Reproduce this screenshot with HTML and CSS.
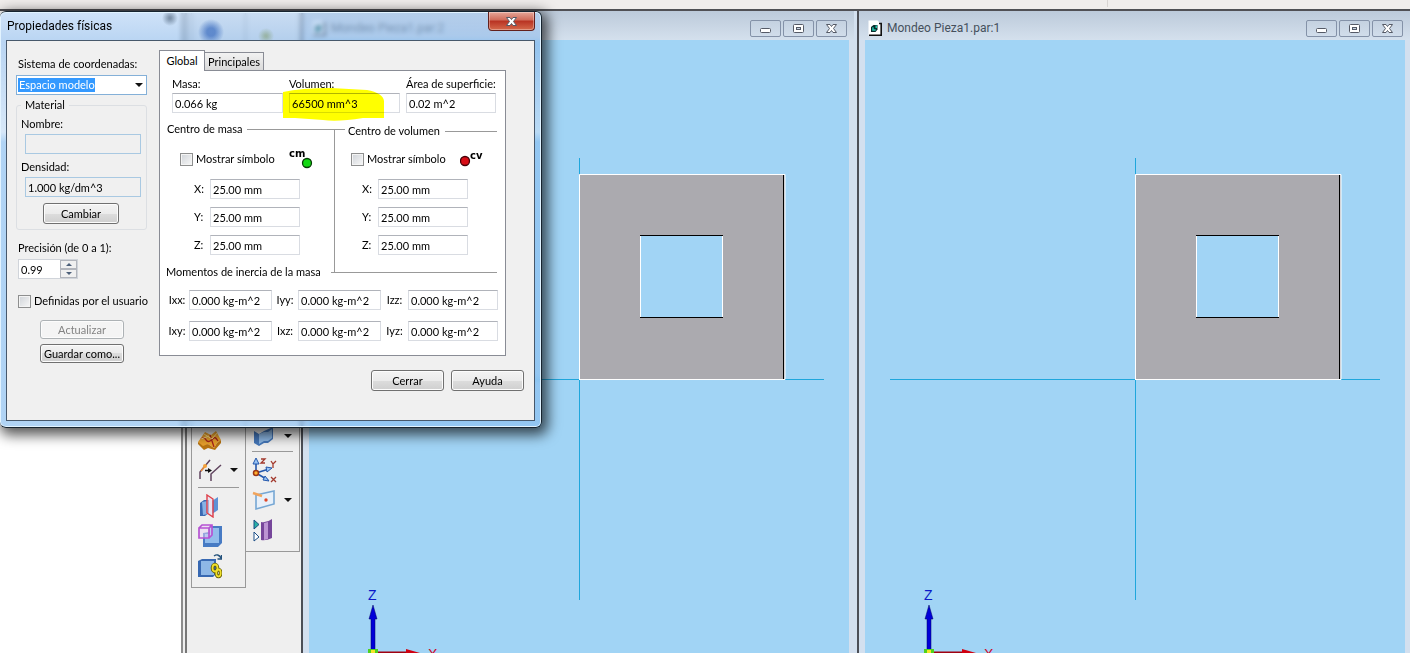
FILE: index.html
```html
<!DOCTYPE html>
<html lang="es">
<head>
<meta charset="utf-8">
<title>Propiedades físicas</title>
<link rel="stylesheet" href="styles.css">
</head>
<body>
<svg class="defs" aria-hidden="true">
  <symbol id="ic-min" viewBox="0 0 13 11"><rect x="1.5" y="5.500" width="10" height="4" rx="1" fill="#fff" stroke="#555a66"/></symbol>
  <symbol id="ic-max" viewBox="0 0 13 11"><rect x="1.500" y="1.500" width="10" height="8" rx="1" fill="#fff" stroke="#555a66"/><rect x="4.500" y="4.500" width="4" height="2" fill="#c9d6e5" stroke="#555a66"/></symbol>
  <symbol id="ic-close" viewBox="0 0 13 11"><path d="M1.500 1.500h3.500l1.500 2 1.500-2h3.500l-3 4 3 4h-3.500l-1.500-2-1.500 2h-3.500l3-4z" fill="#fff" stroke="#555a66" stroke-linejoin="round"/></symbol>
  <symbol id="ic-doc" viewBox="0 0 14 16"><path d="M.5.500h9l4 4v11h-13z" fill="#fff"/><path d="M1 15.200h12.200V3.500H11" fill="none" stroke="#111" stroke-width="1.600"/><path d="M3 7l2.500-2h4v4.500L7.500 12H3z" fill="#0a2b2b"/><path d="M4.200 7.200h1.500v2h2v1.600H4.200zM7.500 5.500h1.500v2.500H7.500z" fill="#24c7ad"/></symbol>
  <symbol id="part" viewBox="0 0 540 613">
    <path d="M270.500 118v442M25 339.500h490" stroke="#1fa6dc" fill="none"/>
    <path fill-rule="evenodd" d="M270 134h206v206H270zM331 195v83h83v-83z" fill="#abaaaf"/>
    <path d="M270.500 340V134.500H476M270 339.500h206v-205M331.500 195v83M413.500 195v83" fill="none" stroke="#fff"/>
    <path d="M474.500 135v204M331 195.500h83M331 277.500h83" fill="none" stroke="#000"/>
    <path d="M62 610v-31h-2l4-14 4 14h-2v31z" fill="#0000d8" stroke="#000060" stroke-width=".5"/>
    <path d="M68 612.500h32" stroke="#a00010" stroke-width="2"/><path d="M97 609l14 4H97z" fill="#d00010"/>
    <path d="M59 609h10v4H59z" fill="#4fd21c"/><path d="M62 610h4v3h-4z" fill="#f5e52a"/>
  </symbol>
</svg>

<div class="app">
  <div class="topstrip"><span></span></div>
  <main class="workspace">
    <div class="blank"></div>
    <div class="splitter"></div>
    <nav class="toolbars" aria-label="Herramientas">
      <div class="bar bar-a">
        <button class="tool" aria-label="Superficie"><svg width="24" height="20" viewBox="0 0 24 20"><path d="M0 12L7 2l6 3 5-4 5 9-4 3-3 5-6-4-5 4z" fill="#eaa12c"/><path d="M0 12l5 4 5-2 6 4 3-5 4-3v3l-6 7-7-2-4 2-6-6z" fill="#b97411"/><path d="M3 9c6-4 4 5 9 2s4-6 8 0M12 5l4 12" fill="none" stroke="#a8231b" stroke-width="1.300"/><path d="M6 4l8 5 5-6M3 9l8-3" stroke="#ffdf85" fill="none"/></svg></button>
        <button class="tool" aria-label="Curva"><svg width="24" height="24" viewBox="0 0 24 24"><path d="M2 21v-7L12 2M13 23v-7L23 7" fill="none" stroke="#60445f" stroke-width="1.500"/><path d="M3 13l5-6" stroke="#e98a3a" stroke-width="1.500"/><circle cx="7" cy="8" r="2" fill="#f4a23b"/><path d="M7 12.500h4" stroke="#111" stroke-width="1.500"/><path d="M10 10l4 2.500-4 2.500z" fill="#111"/></svg><i class="caret"></i></button>
        <hr>
        <button class="tool" aria-label="Plano coincidente"><svg width="24" height="24" viewBox="0 0 24 24"><path d="M2 9l4-3h5v13l-4 3H2z" fill="#3a69b3"/><path d="M4 8l6-1v13l-5 1z" fill="#87b2e5"/><path d="M14 7l6-4v13l-6 4z" fill="#5c91d6"/><path d="M9 1l6 4v18l-6-4z" fill="#e7dcf0" fill-opacity=".65" stroke="#df3e48" stroke-width="1.400"/></svg></button>
        <button class="tool" aria-label="Plano paralelo"><svg width="24" height="24" viewBox="0 0 24 24"><path d="M5 9l6-1V4l2-2h11v17l-4 4H5z" fill="#477bc4"/><path d="M7 10h5V4h9v15H7z" fill="#92bdec"/><path d="M1 4h10v10H1zM1 4l3-3h10v10l-3 3M11 4l3-3" fill="#e9d4f5" fill-opacity=".5" stroke="#b653d3" stroke-width="1.700"/></svg></button>
        <button class="tool" aria-label="Copia vinculada"><svg width="24" height="26" viewBox="0 0 24 26"><path d="M0 8l4-2h14v15l-3 3H0z" fill="#3768b2"/><path d="M3 8h13v14H3z" fill="#8db7e7"/><path d="M16 3q4-3 7 2m.5-3v4h-4" fill="none" stroke="#24527c" stroke-width="1.400"/><g fill="none" stroke="#5d5600" stroke-width="3.600"><ellipse cx="17" cy="15" rx="2.500" ry="3.500"/><ellipse cx="20.500" cy="20" rx="2.200" ry="3.500"/></g><g fill="none" stroke="#efe02c" stroke-width="1.800"><ellipse cx="17" cy="15" rx="2.500" ry="3.500"/><ellipse cx="20.500" cy="20" rx="2.200" ry="3.500"/></g></svg></button>
      </div>
      <div class="bar bar-b">
        <button class="tool" aria-label="Extruir"><svg width="24" height="20" viewBox="0 0 24 20"><path d="M2 5l5 3 5-3 9-4v12l-5 4-4 0-5 3-5-3z" fill="#4577b9"/><path d="M7 8l5-2 4 0 4-3v9l-4 3-4 0-5 3z" fill="#8eb9e6"/></svg><i class="caret"></i></button>
        <hr>
        <button class="tool" aria-label="Sistema de coordenadas"><svg width="26" height="26" viewBox="0 0 26 26"><path d="M4 16V4M4 16l13-4M4 16l12 7" stroke="#2357ac" stroke-width="1.600" fill="none"/><path d="M1 7l3-6 3 6zM14 10l6 1-5 4zM11 23l6 1-4-5z" fill="#9ac5f4" stroke="#2357ac"/><circle cx="4" cy="16" r="2.500" fill="#ffb02e" stroke="#9b3415" stroke-width="1.500"/><path d="M9 2h4L9 6h4M19 4l2 3 3-3M21 7v4M19 20l5 5m0-5l-5 5" stroke="#a33a2e" stroke-width="1.300" fill="none"/></svg></button>
        <button class="tool" aria-label="Boceto"><svg width="24" height="22" viewBox="0 0 24 22"><path d="M4 6l18-4v13L4 20z" fill="#e7f0fa" stroke="#76a7d4" stroke-width="1.600"/><path d="M1 4l9 3" stroke="#f1a45c" stroke-width="2.500"/><circle cx="14" cy="11" r="1.700" fill="#e04728"/></svg><i class="caret"></i></button>
        <button class="tool" aria-label="Simetría"><svg width="24" height="26" viewBox="0 0 24 26"><path d="M2 3l5 4.500L2 12z" fill="#28b1a4" stroke="#1a4d85"/><path d="M2 15l5 5-5 4z" fill="#fff" stroke="#1a4d85"/><path d="M9 5q6 1 11-3v19q-6 3-11 2z" fill="#76469a"/><path d="M12 6l4-1v17l-4 1z" fill="#bc94d3"/></svg></button>
      </div>
    </nav>
    <section class="doc">
      <header class="doc-title"><svg class="doc-icon"><use href="#ic-doc"/></svg><h2>Mondeo Pieza1.par:2</h2>
        <div class="doc-btns"><button aria-label="Minimizar"><svg><use href="#ic-min"/></svg></button><button aria-label="Maximizar"><svg><use href="#ic-max"/></svg></button><button aria-label="Cerrar ventana"><svg><use href="#ic-close"/></svg></button></div></header>
      <div class="canvas"><svg class="model" viewBox="0 0 540 613"><use href="#part"/><text x="59" y="560" class="axis-z">Z</text><text x="119" y="619" class="axis-x">X</text></svg></div>
    </section>
    <section class="doc">
      <header class="doc-title"><svg class="doc-icon"><use href="#ic-doc"/></svg><h2>Mondeo Pieza1.par:1</h2>
        <div class="doc-btns"><button aria-label="Minimizar"><svg><use href="#ic-min"/></svg></button><button aria-label="Maximizar"><svg><use href="#ic-max"/></svg></button><button aria-label="Cerrar ventana"><svg><use href="#ic-close"/></svg></button></div></header>
      <div class="canvas"><svg class="model" viewBox="0 0 540 613"><use href="#part"/><text x="59" y="560" class="axis-z">Z</text><text x="119" y="619" class="axis-x">X</text></svg></div>
    </section>
  </main>
</div>

<div class="dialog" role="dialog" aria-labelledby="dlg-title">
  <header class="dialog-title"><h1 id="dlg-title">Propiedades físicas</h1>
    <button class="close" aria-label="Cerrar diálogo"><svg><use href="#ic-close"/></svg></button></header>
  <div class="client">
    <div class="left">
      <label for="sys">Sistema de coordenadas:</label>
      <div class="combo"><select id="sys"><option>Espacio modelo</option></select><i class="caret"></i></div>
      <fieldset class="material"><legend>Material</legend>
        <label for="nom">Nombre:</label><input id="nom" class="ro" readonly>
        <label for="den">Densidad:</label><input id="den" class="ro" readonly value="1.000 kg/dm^3">
        <button class="btn">Cambiar</button>
      </fieldset>
      <label for="pre">Precisión (de 0 a 1):</label>
      <div class="spin"><input id="pre" value="0.99"><div class="steps"><button aria-label="Aumentar"><i class="up"></i></button><button aria-label="Reducir"><i class="down"></i></button></div></div>
      <label class="check user"><input type="checkbox">Definidas por el usuario</label>
      <div class="stack"><button class="btn low" disabled>Actualizar</button><button class="btn low">Guardar como...</button></div>
    </div>
    <div class="right">
      <div class="tabs" role="tablist"><button role="tab" aria-selected="true" class="tab on">Global</button><button role="tab" aria-selected="false" class="tab">Principales</button></div>
      <div class="panel" role="tabpanel">
        <div class="totals">
          <div><label for="masa">Masa:</label><input id="masa" value="0.066 kg"></div>
          <div class="vol"><label for="vol">Volumen:</label><input id="vol" value="66500 mm^3"><svg class="marker" viewBox="0 0 102 34" aria-hidden="true"><path d="M0 4Q18 0 48 0L84 2Q100 5 101 13V30H80Q55 34 40 32L12 30H0z" fill="#ff0"/></svg></div>
          <div><label for="area">Área de superficie:</label><input id="area" value="0.02 m^2"></div>
        </div>
        <div class="centers">
          <section class="center first"><h3><span>Centro de masa</span></h3>
            <div class="show"><label class="check"><input type="checkbox">Mostrar símbolo</label><svg width="26" height="24" viewBox="0 0 26 24"><text x="0" y="10" class="sym">cm</text><circle cx="18" cy="16" r="4.500" fill="#12d812" stroke="#063c06" stroke-width="1.300"/></svg></div>
            <div class="xyz"><label for="mx">X:</label><input id="mx" value="25.00 mm"><label for="my">Y:</label><input id="my" value="25.00 mm"><label for="mz">Z:</label><input id="mz" value="25.00 mm"></div>
          </section>
          <section class="center second"><h3><span>Centro de volumen</span></h3>
            <div class="show"><label class="check"><input type="checkbox">Mostrar símbolo</label><svg width="26" height="24" viewBox="0 0 26 24"><circle cx="5" cy="14" r="4.500" fill="#d80d16" stroke="#450006" stroke-width="1.300"/><text x="10" y="12" class="sym">cv</text></svg></div>
            <div class="xyz"><label for="vx">X:</label><input id="vx" value="25.00 mm"><label for="vy">Y:</label><input id="vy" value="25.00 mm"><label for="vz">Z:</label><input id="vz" value="25.00 mm"></div>
          </section>
        </div>
        <h3 class="moments"><span>Momentos de inercia de la masa</span></h3>
        <div class="inertia">
          <label for="ixx">Ixx:</label><input id="ixx" value="0.000 kg-m^2"><label for="iyy">Iyy:</label><input id="iyy" value="0.000 kg-m^2"><label for="izz">Izz:</label><input id="izz" value="0.000 kg-m^2">
          <label for="ixy">Ixy:</label><input id="ixy" value="0.000 kg-m^2"><label for="ixz">Ixz:</label><input id="ixz" value="0.000 kg-m^2"><label for="iyz">Iyz:</label><input id="iyz" value="0.000 kg-m^2">
        </div>
      </div>
      <div class="actions"><button class="btn">Cerrar</button><button class="btn">Ayuda</button></div>
    </div>
  </div>
</div>
</body>
</html>
```
FILE: styles.css
```css
* { box-sizing: border-box; }
body { margin: 0; font: 11px/16px Lato, "Liberation Sans", Arial, sans-serif; color: #000; background: #fff; }
button, input, select { font: inherit; color: inherit; margin: 0; padding: 0; border: 0; background: none; }
h1, h2, h3 { margin: 0; font-size: inherit; font-weight: normal; }
label, legend { white-space: nowrap; }
.defs { position: absolute; width: 0; height: 0; }

/* Application background */
.app { display: flex; flex-direction: column; height: 100vh; overflow: hidden; }
.topstrip { display: flex; justify-content: flex-end; flex: none; height: 11px; background: #f0edec; border-bottom: 2px solid #505055; }
.topstrip span { width: 303px; height: 7px; border-left: 1px solid #d8d4d2; }
.workspace { flex: 1; display: flex; min-height: 0; background: #d3e0ef; }
.blank { width: 181px; flex: none; background: #fff; }
.splitter { width: 6px; flex: none; background: #eee; border-left: 2px solid #8c8c8c; border-right: 2px solid #777; }
.toolbars { display: flex; align-items: flex-start; flex: none; width: 114px; padding-left: 4px; background: #efefef; }
.bar { display: flex; flex-direction: column; width: 54px; padding: 418px 6px 0; border: 1px solid #999; border-top: 0; }
.bar-a { width: 55px; height: 577px; }
.bar-b { height: 541px; padding-top: 414px; border-left: 0; }
.bar hr { width: 100%; margin: 2px 0 3px; border: 0; border-top: 1px solid #999; }
.tool { display: flex; align-items: center; gap: 8px; height: 30px; flex: none; }
.bar-a .tool:first-child { height: 22px; margin-bottom: 4px; }
.bar-b .tool:first-child { height: 22px; margin-bottom: 2px; }
.tool svg { flex: none; }
.caret { flex: none; border: 4px solid transparent; border-top-color: #111; border-bottom: 0; }

.doc { flex: 1; min-width: 0; display: flex; flex-direction: column; background: #d3e0ef; border-left: 2px solid #4c4f57; padding: 0 5px 0 6px; }
.doc + .doc { margin-left: 3px; }
.doc-title { display: flex; align-items: center; height: 29px; flex: none; margin: 0 -5px 0 -6px; padding: 5px 7px 0 9px; background: linear-gradient(#bccada, #d4e0ed); }
.doc-icon { width: 14px; height: 16px; margin-right: 5px; }
.doc-title h2 { flex: 1; font: 12px/16px Roboto, sans-serif; color: #45505c; }
.doc-btns { display: flex; gap: 2px; }
.doc-btns button { display: flex; align-items: center; justify-content: center; width: 31px; height: 17px; border: 1px solid #8492a8; border-radius: 2px; }
.doc-btns svg, .close svg { width: 13px; height: 11px; }
.canvas { flex: 1; min-height: 0; overflow: hidden; background: #a1d4f5; }
.model { display: block; width: 540px; height: 613px; }
.axis-z { font: 14px "Liberation Sans", sans-serif; fill: #0b18c8; }
.axis-x { font: 14px "Liberation Sans", sans-serif; fill: #d00024; }

/* Floating dialog */
.dialog { position: absolute; left: 0; top: 11px; width: 542px; padding: 0 6px 6px; border: 1px solid #17242f; border-left: 0; border-radius: 6px;
  background: radial-gradient(circle at 170px 6px, #3a506888 1px, transparent 8px), radial-gradient(circle at 211px 20px, #3e6fc0bb 4px, transparent 13px), radial-gradient(circle at 266px 24px, #7f9c6c88 1px, transparent 8px), linear-gradient(#b0d0f499, #8ab8ea99 30px, #c5ddf5b0 120px, #8dc0f0b0 130px, #8dc0f0b0);
  backdrop-filter: blur(2px); box-shadow: inset 0 0 0 1px #e2f3ff, 3px 4px 13px 3px #000a; }
.dialog-title { display: flex; justify-content: space-between; align-items: flex-start; height: 28px; }
.dialog-title h1 { font: 12px/16px Roboto, sans-serif; margin: 6px 0 0 1px; }
.close { display: flex; align-items: center; justify-content: center; width: 47px; height: 19px; border: 1px solid #63201c; border-top: 0; border-radius: 0 0 4px 4px; background: linear-gradient(#e5a698, #cf6a58 45%, #b83222 50%, #d56a4c); box-shadow: inset 0 0 0 1px #fff5; }
.client { display: flex; gap: 12px; height: 381px; padding: 9px; border: 1px solid #47586b; background: #f0f0f0; }
.left { width: 131px; flex: none; display: flex; flex-direction: column; align-items: flex-start; padding-top: 6px; }
.left > label { padding-left: 2px; }
.combo { display: flex; align-items: center; width: 100%; margin-top: 3px; border: 1px solid #84b0d8; background: #fff; }
.combo select { flex: 1; height: 18px; min-width: 0; padding-left: 2px; appearance: none; outline: 0; color: #fff; background: linear-gradient(#39f, #39f) no-repeat 1px 2px / 77px 14px; }
.combo .caret { margin-right: 3px; pointer-events: none; }
.material { display: flex; flex-direction: column; width: 100%; min-width: 0; margin: 2px 0 10px; padding: 3px 5px 5px 4px; border: 1px solid #dcdfe3; border-radius: 3px; }
.material legend { padding: 0 4px; }
.material input { height: 20px; margin: 2px 0 5px 4px; }
.material .btn { width: 76px; margin: 1px 0 0 22px; }
input:not([type]) { width: 100%; min-width: 0; height: 20px; padding: 0 2px; border: 1px solid #d9dce2; border-top-color: #b0b3ba; background: #fff; }
input.ro:not([type]) { width: auto; border-color: #a9c9e2; background: #f0f0f0; }
.btn { height: 21px; border: 1px solid #707070; border-radius: 3px; white-space: nowrap; background: linear-gradient(#f3f3f3, #ebebeb 50%, #ddd 50%, #cfcfcf); box-shadow: inset 0 0 0 1px #fcfcfc; }
.btn:disabled { color: #838383; border-color: #adb2b5; background: #f4f4f4; }
.spin { display: flex; width: 60px; margin: 3px 0 14px 2px; border: 1px solid #d0d4da; background: #fff; }
.spin input:not([type]) { border: 0; height: 18px; padding: 0 2px; }
.steps { flex: none; display: flex; flex-direction: column; width: 17px; }
.steps button { display: flex; flex: 1; align-items: center; justify-content: center; border: 1px solid #b2b5bc; background: #f0f0f0; }
.up, .down { border: 3px solid transparent; border-top: 0; border-bottom-color: #4d607a; }
.down { border: 3px solid transparent; border-bottom: 0; border-top-color: #4d607a; }
.check { display: flex; align-items: center; gap: 3px; }
.check input { appearance: none; flex: none; width: 13px; height: 13px; border: 1px solid #8e8f8f; background: linear-gradient(135deg, #cfd3d8, #f8f8f8); box-shadow: inset 0 0 0 1px #f4f4f4; }
.stack { display: flex; flex-direction: column; gap: 5px; width: 84px; margin: 11px 0 0 24px; }
.low { height: 19px; }

.right { flex: 1; display: flex; flex-direction: column; min-width: 0; }
.tabs { display: flex; align-items: flex-end; height: 20px; }
.tab { height: 18px; width: 59px; border: 1px solid #898c95; border-left: 0; border-bottom: 0; background: linear-gradient(#f2f2f2, #dadada); }
.tab.on { position: relative; width: 46px; height: 21px; margin-bottom: -1px; border-left: 1px solid #898c95; background: #fff; }
.panel { margin-right: 19px; padding: 5px 8px 14px 6px; border: 1px solid #898c95; background: #fff; }
.totals { display: grid; grid-template-columns: 111px 111px 90px; gap: 6px; padding-left: 6px; }
.totals div { display: flex; flex-direction: column; gap: 1px; }
.vol { position: relative; }
.marker { position: absolute; left: -6px; top: 12px; width: 102px; height: 34px; mix-blend-mode: multiply; pointer-events: none; }
.centers { display: grid; grid-template-columns: 168px 1fr; margin-top: 8px; }
.center { display: flex; flex-direction: column; padding-bottom: 18px; }
.second { margin-top: 8px; border-left: 1px solid #999; }
.center h3, .moments { display: flex; align-items: center; gap: 5px; white-space: nowrap; }
.center h3::after, .moments::after { content: ""; flex: 1; height: 1px; background: #999; }
.first h3 { margin-right: -11px; padding-left: 1px; }
.second h3 { margin-top: -6px; padding-left: 13px; }
.show { display: flex; align-items: center; margin: 10px 0 8px 14px; }
.show .check { width: 109px; }
.second .show { margin: 8px 0 8px 16px; }
.xyz { display: grid; grid-template-columns: 13px 90px; gap: 8px 3px; align-items: center; padding-left: 28px; }
.second .xyz { padding-left: 27px; }
.sym { font: bold 10px "DejaVu Sans", sans-serif; }
.moments { gap: 10px; margin-top: -9px; }
.inertia { display: grid; grid-template-columns: 18px 83px 20px 83px 21px 90px; gap: 11px 3px; align-items: center; margin-top: 10px; padding-left: 2px; }
.inertia label { text-align: center; }
.actions { display: flex; gap: 7px; justify-content: flex-end; margin: 14px 1px 0 0; }
.actions .btn { width: 73px; }
```
